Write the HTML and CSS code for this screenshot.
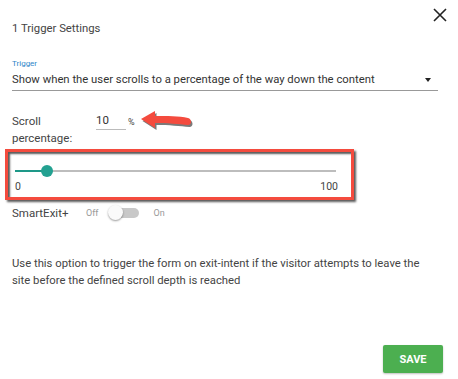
FILE: index.html
```html
<!DOCTYPE html>
<html lang="en">
<head>
    <meta charset="UTF-8">
    <title>Trigger Settings</title>
    <link rel="stylesheet" href="styles.css">
</head>
<body>
    <div class="dialog">
        <button class="close-btn" aria-label="Close">
            <svg width="14" height="14" viewBox="0 0 14 14"><path d="M1 1L13 13M13 1L1 13" stroke="#222" stroke-width="1.6"/></svg>
        </button>
        <h2 class="title">1 Trigger Settings</h2>

        <div class="field">
            <label class="field-label">Trigger</label>
            <div class="select">
                <span>Show when the user scrolls to a percentage of the way down the content</span>
                <span class="caret"></span>
            </div>
        </div>

        <div class="scroll-row">
            <div class="scroll-label">Scroll<br>percentage:</div>
            <div class="pct-input">10</div>
            <span class="pct-sign">%</span>
            <svg class="arrow" width="56" height="22" viewBox="0 0 56 22">
                <path d="M2 9 L16 1 L16 6 C28 6 40 6 49 8 C53 9 53 15 49 15 C40 14 28 13 16 13 L16 18 Z" fill="#222" opacity="0.6" transform="translate(1.5 2)"/>
                <path d="M2 9 L16 1 L16 6 C28 6 40 6 49 8 C53 9 53 15 49 15 C40 14 28 13 16 13 L16 18 Z" fill="#f44b3e"/>
            </svg>
        </div>

        <div class="slider-box">
            <div class="slider">
                <div class="track"><div class="fill" style="width: 10%"></div></div>
                <div class="thumb" style="left: 10%"></div>
            </div>
            <div class="slider-scale"><span>0</span><span>100</span></div>
        </div>

        <div class="smart-row">
            <span class="smart-label">SmartExit+</span>
            <span class="switch-text">Off</span>
            <span class="switch"><span class="knob"></span></span>
            <span class="switch-text">On</span>
        </div>

        <p class="help">Use this option to trigger the form on exit-intent if the visitor attempts to leave the site before the defined scroll depth is reached</p>

        <div class="actions">
            <button class="save-btn">SAVE</button>
        </div>
    </div>
</body>
</html>
```

FILE: styles.css
```css
body {
    margin: 0;
    font-family: Roboto, Arial, sans-serif;
    background: #fff;
    color: #444;
}

.dialog {
    position: relative;
    width: 458px;
    height: 379px;
    box-sizing: border-box;
    padding: 21px 20px 0 12px;
    display: flex;
    flex-direction: column;
}

.close-btn {
    position: absolute;
    top: 8px;
    right: 11px;
    border: none;
    background: none;
    padding: 0;
    cursor: pointer;
}

.title {
    margin: 0;
    font-size: 11.3px;
    font-weight: 400;
    line-height: 16px;
    color: #444;
}

.field {
    margin-top: 22px;
}

.field-label {
    display: block;
    font-size: 8px;
    line-height: 10px;
    color: #2f86c8;
}

.select {
    display: flex;
    justify-content: space-between;
    align-items: center;
    width: 426px;
    height: 21px;
    border-bottom: 1px solid #999;
    font-size: 11.3px;
    color: #333;
}

.caret {
    width: 0;
    height: 0;
    margin-right: 7px;
    border-left: 3px solid transparent;
    border-right: 3px solid transparent;
    border-top: 4px solid #222;
}

.scroll-row {
    display: flex;
    align-items: flex-start;
    margin-top: 22px;
}

.scroll-label {
    width: 84px;
    font-size: 11.5px;
    line-height: 17px;
}

.pct-input {
    width: 30px;
    height: 16px;
    border-bottom: 1px solid #bbb;
    font-size: 11.5px;
    line-height: 14px;
    color: #333;
}

.pct-sign {
    margin: 4px 0 0 2px;
    font-size: 9px;
}

.arrow {
    margin: -3px 0 0 4px;
}

.slider-box {
    width: 349px;
    height: 51px;
    margin: 2px 0 0 -7px;
    box-sizing: border-box;
    padding: 13px 15px 0 7px;
    border: 3px solid #f44b3e;
    box-shadow: 2px 2px 2px rgba(0, 0, 0, 0.65), inset 2px 2px 2px rgba(0, 0, 0, 0.65);
}

.slider {
    position: relative;
    height: 12px;
    display: flex;
    align-items: center;
}

.track {
    width: 100%;
    height: 2px;
    background: #bdbdbd;
}

.fill {
    height: 100%;
    background: #1e9888;
}

.thumb {
    position: absolute;
    top: 0;
    width: 12px;
    height: 12px;
    margin-left: -6px;
    border-radius: 50%;
    background: #23a191;
}

.slider-scale {
    display: flex;
    justify-content: space-between;
    margin: 3px -2px 0 0;
    font-size: 10.5px;
    color: #444;
}

.smart-row {
    display: flex;
    align-items: center;
    margin-top: 3px;
    height: 20px;
}

.smart-label {
    width: 74px;
    font-size: 11.5px;
}

.switch-text {
    font-size: 9px;
    color: #999;
}

.switch {
    position: relative;
    width: 26px;
    height: 10px;
    margin: 0 14px 0 15px;
    border-radius: 5px;
    background: #c8c8c8;
}

.knob {
    position: absolute;
    top: -3px;
    left: -5px;
    width: 15px;
    height: 15px;
    border-radius: 50%;
    background: #fafafa;
    box-shadow: 0 1px 2px rgba(0, 0, 0, 0.4);
}

.help {
    max-width: 425px;
    margin: 32px 0 0;
    font-size: 11.3px;
    line-height: 17px;
    color: #444;
}

.actions {
    display: flex;
    justify-content: flex-end;
    margin-top: auto;
    padding-bottom: 6px;
}

.save-btn {
    width: 60px;
    height: 28px;
    margin-right: -5px;
    border: none;
    border-radius: 2px;
    background: #4caf50;
    color: #fff;
    font-family: Roboto, Arial, sans-serif;
    font-size: 11px;
    font-weight: 700;
    box-shadow: 0 1px 2px rgba(0, 0, 0, 0.25);
    cursor: pointer;
}
```
